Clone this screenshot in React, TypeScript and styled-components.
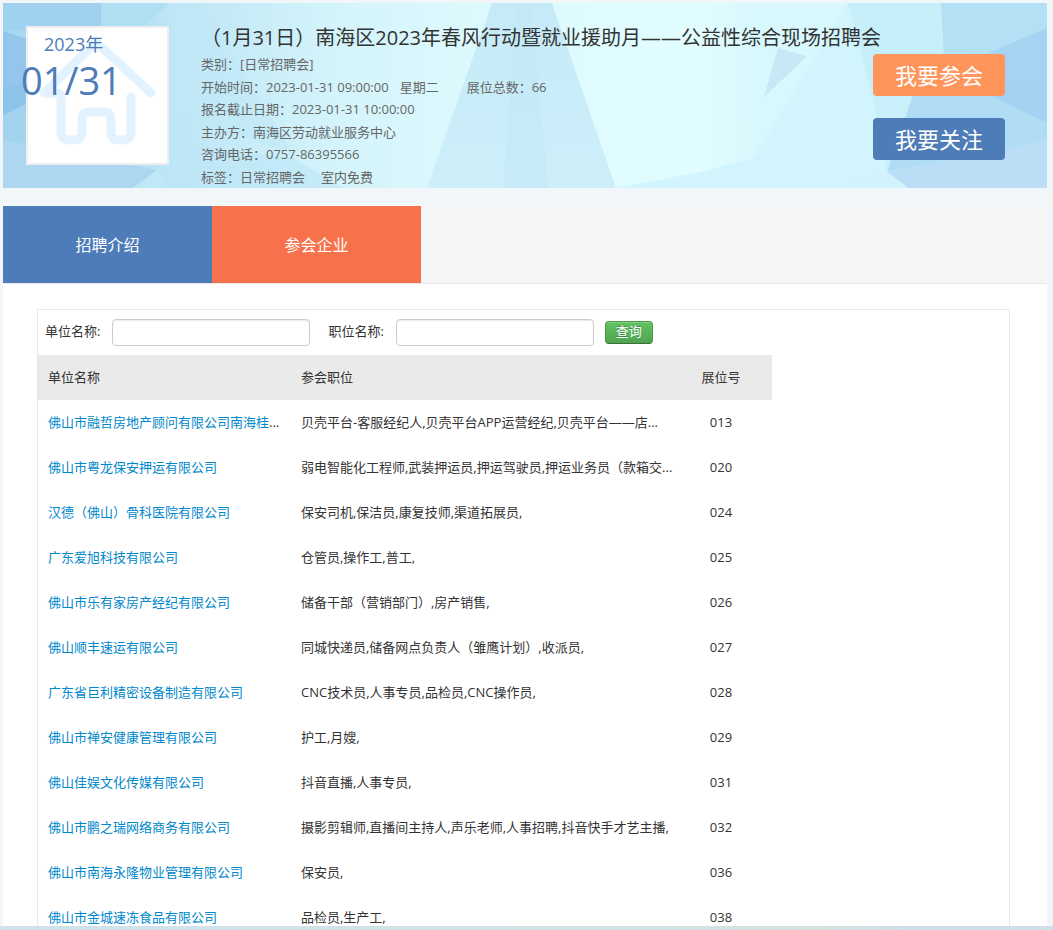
import React from "react";
import styled, { createGlobalStyle } from "styled-components";

const GlobalStyle = createGlobalStyle`
  * { box-sizing: border-box; }
  body {
    margin: 0;
    background: #f1f6f9;
    color: #333;
    font: 13px/22px "Open Sans", "Noto Sans CJK SC", sans-serif;
  }
  button, input { font: inherit; }
`;

const Page = styled.div`
  height: 100vh;
  display: flex;
  flex-direction: column;
  overflow: hidden;
`;

const Content = styled.div`
  flex: 1;
  min-height: 0;
  display: flex;
  flex-direction: column;
  padding: 3px 6px 0 3px;
`;

const Banner = styled.header`
  position: relative;
  flex: none;
  display: flex;
  height: 185px;
  background: #d3f3fb;
`;

const Facets = styled.svg`
  position: absolute;
  inset: 0;
  width: 100%;
  height: 100%;
`;

const DateCard = styled.div`
  position: relative;
  flex: none;
  width: 143px;
  height: 139px;
  margin: 23px 32px 0 23px;
  border: 2px solid #eee;
  background: #fff;
  color: #4d7cb8;
`;

const House = styled.svg`
  display: block;
  width: 139px;
  height: 135px;
`;

const Year = styled.span`
  position: absolute;
  top: 4px;
  left: 16px;
  font-size: 18px;
  line-height: 24px;
`;

const Day = styled.span`
  position: absolute;
  top: 30px;
  left: -7px;
  font-size: 38px;
  line-height: 44px;
`;

const Details = styled.div`
  position: relative;
  flex: 1;
  min-width: 0;
  display: flex;
  flex-direction: column;
`;

const Title = styled.h1`
  margin: 0;
  padding-top: 21px;
  height: 50px;
  font-size: 20px;
  line-height: 28px;
  font-weight: 400;
  white-space: nowrap;
`;

const Facts = styled.ul`
  flex: 1;
  display: flex;
  flex-direction: column;
  justify-content: space-between;
  margin: 0;
  padding: 0;
  list-style: none;
  color: #666;
`;

const Fact = styled.li`
  display: flex;
  white-space: nowrap;
`;

const Part = styled.span<{ $gap: number }>`
  margin-left: ${(p) => p.$gap}px;
`;

const Actions = styled.div`
  position: relative;
  flex: none;
  display: flex;
  flex-direction: column;
  gap: 22px;
  padding: 51px 42px 0 0;
`;

const ActionButton = styled.button<{ $color: string }>`
  width: 132px;
  height: 42px;
  padding: 0;
  border: 0;
  border-radius: 4px;
  background: ${(p) => p.$color};
  color: #fff;
  font-size: 22px;
  line-height: 42px;
`;

const Tabs = styled.nav`
  flex: none;
  display: flex;
  margin-top: 18px;
  height: 78px;
  border-bottom: 1px solid #e8e8e8;
  background: #f5f5f5;
`;

const Tab = styled.a<{ $color: string }>`
  width: 209px;
  padding-top: 1px;
  background: ${(p) => p.$color};
  color: #fff;
  font-size: 16px;
  line-height: 76px;
  text-align: center;
  text-decoration: none;
`;

const Body = styled.main`
  flex: 1;
  min-height: 0;
  overflow: hidden;
  padding: 25px 37px 0 34px;
  background: #fff;
`;

const Panel = styled.section`
  border: 1px solid #e8e8e8;
`;

const SearchForm = styled.form`
  display: flex;
  align-items: center;
  height: 45px;
  padding-left: 7px;
`;

const Field = styled.label`
  display: flex;
  align-items: center;
  gap: 12px;
  margin-right: 18px;
  white-space: nowrap;

  & + & { margin-right: 11px; }
`;

const FieldName = styled.span`
  padding-bottom: 3px;
`;

const TextBox = styled.input`
  width: 198px;
  height: 27px;
  padding: 2px 6px;
  border: 1px solid #ccc;
  border-radius: 4px;
  background: #fff;
  box-shadow: inset 0 1px 1px rgba(0, 0, 0, 0.08);
`;

const SearchButton = styled.button`
  width: 48px;
  height: 23px;
  padding: 0 0 2px;
  border: 1px solid #4a9a4a;
  border-bottom-color: #387038;
  border-radius: 4px;
  background: linear-gradient(#62c462, #51a351);
  box-shadow: inset 0 1px 0 rgba(255, 255, 255, 0.2);
  color: #fff;
  line-height: 19px;
  text-shadow: 0 -1px 0 rgba(0, 0, 0, 0.25);
`;

const BoothTable = styled.table`
  width: 734px;
  table-layout: fixed;
  border-collapse: collapse;
`;

const Heading = styled.th<{ $width: number; $center?: boolean }>`
  width: ${(p) => p.$width}px;
  height: 45px;
  padding: 0 10px 2px;
  background: #eaeaea;
  font-weight: 400;
  text-align: ${(p) => (p.$center ? "center" : "left")};
`;

const Cell = styled.td<{ $center?: boolean }>`
  height: 45px;
  padding: 0 10px 2px;
  text-align: ${(p) => (p.$center ? "center" : "left")};
  white-space: nowrap;
`;

const CompanyLink = styled.a`
  color: #08c;
  text-decoration: none;
`;

const Strip = styled.footer`
  flex: none;
  height: 4px;
  background: linear-gradient(90deg, #d0e1e9, #d3e4e6 60%, #d6e0df 78%, #cfdfe9 88%);
`;

type Company = { name: string; cut?: boolean; jobs: string; booth: string };

const companies: Company[] = [
  { name: "佛山市融哲房地产顾问有限公司南海桂", cut: true, jobs: "贝壳平台-客服经纪人,贝壳平台APP运营经纪,贝壳平台——店...", booth: "013" },
  { name: "佛山市粤龙保安押运有限公司", jobs: "弱电智能化工程师,武装押运员,押运驾驶员,押运业务员（款箱交...", booth: "020" },
  { name: "汉德（佛山）骨科医院有限公司", jobs: "保安司机,保洁员,康复技师,渠道拓展员,", booth: "024" },
  { name: "广东爱旭科技有限公司", jobs: "仓管员,操作工,普工,", booth: "025" },
  { name: "佛山市乐有家房产经纪有限公司", jobs: "储备干部（营销部门）,房产销售,", booth: "026" },
  { name: "佛山顺丰速运有限公司", jobs: "同城快递员,储备网点负责人（雏鹰计划）,收派员,", booth: "027" },
  { name: "广东省巨利精密设备制造有限公司", jobs: "CNC技术员,人事专员,品检员,CNC操作员,", booth: "028" },
  { name: "佛山市禅安健康管理有限公司", jobs: "护工,月嫂,", booth: "029" },
  { name: "佛山佳娱文化传媒有限公司", jobs: "抖音直播,人事专员,", booth: "031" },
  { name: "佛山市鹏之瑞网络商务有限公司", jobs: "摄影剪辑师,直播间主持人,声乐老师,人事招聘,抖音快手才艺主播,", booth: "032" },
  { name: "佛山市南海永隆物业管理有限公司", jobs: "保安员,", booth: "036" },
  { name: "佛山市金城速冻食品有限公司", jobs: "品检员,生产工,", booth: "038" },
];

function BannerFacets() {
  return (
    <Facets viewBox="0 0 1044 185" preserveAspectRatio="none" aria-hidden="true">
      <defs>
        <linearGradient id="sky">
          <stop offset="0" stopColor="#a6d6f2" />
          <stop offset="0.1" stopColor="#b2e0f4" />
          <stop offset="0.2" stopColor="#c3e9f7" />
          <stop offset="0.32" stopColor="#d4f4fb" />
          <stop offset="0.45" stopColor="#dcf9fd" />
          <stop offset="0.66" stopColor="#e2fdff" />
          <stop offset="0.82" stopColor="#caeff9" />
          <stop offset="1" stopColor="#b0dcf5" />
        </linearGradient>
        <linearGradient id="beam" x2="0" y2="1">
          <stop offset="0" stopColor="#c5eaf8" />
          <stop offset="1" stopColor="#ceeffa" />
        </linearGradient>
      </defs>
      <rect width="1044" height="185" fill="url(#sky)" />
      <path d="M0 0H100L98 24L70 24L0 0Z" fill="#a3d3f1" />
      <path d="M0 0L100 0L98 24H60L0 28Z" fill="#a0d1f0" />
      <path d="M0 28L24 36V78L0 85Z" fill="#93c6ea" />
      <path d="M0 85L24 78V104L0 137Z" fill="#8fc4ea" />
      <path d="M0 113L24 100V141L0 137Z" fill="#a4d3f0" />
      <path d="M0 137L154 167L130 185H0Z" fill="#add6f1" />
      <path d="M166 136L154 167L166 140Z" fill="#bfe4f5" />
      <path d="M154 167L166 185H130Z" fill="#bfe8f6" />
      <path d="M154 167L166 140L290 155L340 185H166Z" fill="#bce6f7" opacity="0.6" />
      <path d="M98 0H166L140 24H98Z" fill="#aedff3" />
      <path d="M166 0H195L290 150L166 110Z" fill="#bfe7f6" opacity="0.6" />
      <path d="M489 0H549L613 185H424Z" fill="url(#beam)" />
      <path d="M515 0H528L545 185H500Z" fill="#c0e6f7" opacity="0.35" />
      <path d="M736 0H845L750 155Z" fill="#d9f8fd" />
      <path d="M750 155L845 0H938V50L873 150L930 168V185H613L697 169Z" fill="#d2f4fc" />
      <path d="M845 0H938L941 52L870 95Z" fill="#c6effa" />
      <path d="M870 95L941 52L905 120L884 169Z" fill="#c8effa" />
      <path d="M938 0H1044V27L986 50L941 52Z" fill="#b3e0f5" />
      <path d="M941 52L986 50L1000 78V100H910Z" fill="#b2def5" />
      <path d="M986 50L1044 25V80L1000 78Z" fill="#a6d3f2" />
      <path d="M1000 78L1044 80V120L986 92Z" fill="#a3d2f3" />
      <path d="M910 92H986L1044 120V137L1003 145L884 169Z" fill="#b0ddf5" />
      <path d="M884 169L1003 145L1044 137V185H905Z" fill="#b9def5" />
      <path d="M884 169L905 185H830Z" fill="#d2f3fb" />
      <path d="M775 45L804 53L761 94Z" fill="#c6e8f7" />
    </Facets>
  );
}

export default function App() {
  return (
    <>
      <GlobalStyle />
      <Page>
        <Content>
          <Banner>
            <BannerFacets />
            <DateCard>
              <House viewBox="28 28 139 135" fill="none" stroke="#e2f3ff" strokeWidth="9" strokeLinecap="round" strokeLinejoin="round" aria-hidden="true">
                <path d="M151 93L96 42L44 93H57Q61 93 61 98V132Q61 140 69 140H74Q82 140 82 132V119Q82 112 89 112H104Q111 112 111 119V132Q111 140 119 140H123Q131 140 131 132V97" />
              </House>
              <Year>2023年</Year>
              <Day>01/31</Day>
            </DateCard>
            <Details>
              <Title>（1月31日）南海区2023年春风行动暨就业援助月——公益性综合现场招聘会</Title>
              <Facts>
                <Fact>类别：[日常招聘会]</Fact>
                <Fact>
                  开始时间：2023-01-31 09:00:00
                  <Part $gap={11}>星期二</Part>
                  <Part $gap={28}>展位总数：66</Part>
                </Fact>
                <Fact>报名截止日期：2023-01-31 10:00:00</Fact>
                <Fact>主办方：南海区劳动就业服务中心</Fact>
                <Fact>咨询电话：0757-86395566</Fact>
                <Fact>
                  标签：日常招聘会
                  <Part $gap={16}>室内免费</Part>
                </Fact>
              </Facts>
            </Details>
            <Actions>
              <ActionButton type="button" $color="#ff955b">我要参会</ActionButton>
              <ActionButton type="button" $color="#4d7cb8">我要关注</ActionButton>
            </Actions>
          </Banner>
          <Tabs>
            <Tab href="#intro" $color="#4d7cb8">招聘介绍</Tab>
            <Tab href="#companies" $color="#f7724a">参会企业</Tab>
          </Tabs>
          <Body>
            <Panel>
              <SearchForm>
                <Field>
                  <FieldName>单位名称:</FieldName>
                  <TextBox type="text" name="company" />
                </Field>
                <Field>
                  <FieldName>职位名称:</FieldName>
                  <TextBox type="text" name="job" />
                </Field>
                <SearchButton type="button">查询</SearchButton>
              </SearchForm>
              <BoothTable>
                <thead>
                  <tr>
                    <Heading $width={253}>单位名称</Heading>
                    <Heading $width={379}>参会职位</Heading>
                    <Heading $width={102} $center>展位号</Heading>
                  </tr>
                </thead>
                <tbody>
                  {companies.map((c) => (
                    <tr key={c.booth}>
                      <Cell>
                        <CompanyLink href={`#booth-${c.booth}`}>{c.name}</CompanyLink>
                        {c.cut && "..."}
                      </Cell>
                      <Cell>{c.jobs}</Cell>
                      <Cell $center>{c.booth}</Cell>
                    </tr>
                  ))}
                </tbody>
              </BoothTable>
            </Panel>
          </Body>
        </Content>
        <Strip />
      </Page>
    </>
  );
}
